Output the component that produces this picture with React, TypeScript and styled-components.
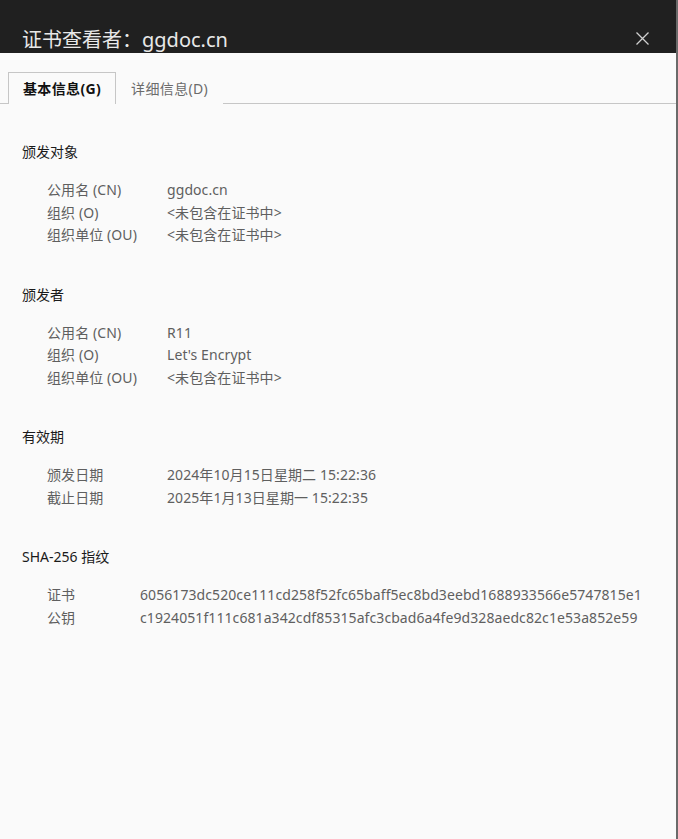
import React from "react";
import styled, { createGlobalStyle } from "styled-components";

const Global = createGlobalStyle`
  html, body { margin: 0; padding: 0; background: #fafafa; }
  body { font-family: "Noto Sans", "Noto Sans CJK SC", sans-serif; }
`;

const Window = styled.div`
  width: 678px;
  height: 839px;
  box-sizing: border-box;
  display: flex;
  flex-direction: column;
  background: #fafafa;
  border-right: 2px solid #6a6a6a;
  overflow: hidden;
`;

const TitleBar = styled.div`
  height: 53px;
  flex: none;
  background: #202020;
  display: flex;
  align-items: flex-end;
  justify-content: space-between;
  padding: 0 27px 0 22px;
  box-sizing: border-box;
`;

const Title = styled.div`
  color: #e8e8e8;
  font-size: 20px;
  line-height: 27px;
  font-family: "Segoe UI", "Noto Sans", "Noto Sans CJK SC", sans-serif;
`;

const CloseButton = styled.div`
  width: 14px;
  height: 14px;
  margin-bottom: 8px;
  display: flex;
  align-items: center;
  justify-content: center;
`;

const TabBar = styled.div`
  margin-top: 19px;
  display: flex;
  align-items: flex-end;
  padding-left: 8px;
  border-bottom: 1px solid #c6c6c6;
  height: 31px;
`;

const Tab = styled.div<{ $active?: boolean }>`
  box-sizing: border-box;
  padding: 0 14px 2px;
  display: flex;
  align-items: center;
  font-size: 14px;
  letter-spacing: 0.35px;
  font-weight: ${(p) => (p.$active ? 700 : 400)};
  color: ${(p) => (p.$active ? "#111" : "#6b6b6b")};
  border: 1px solid ${(p) => (p.$active ? "#c6c6c6" : "transparent")};
  border-bottom: none;
  background: #fafafa;
  margin-bottom: -1px;
  height: 32px;
`;

const Content = styled.div`
  padding: 38px 0 0 22px;
  display: flex;
  flex-direction: column;
  gap: 38px;
`;

const Section = styled.section`
  display: flex;
  flex-direction: column;
  gap: 17px;
`;

const SectionTitle = styled.div`
  font-size: 14px;
  line-height: 20px;
  color: #1a1a1a;
`;

const Rows = styled.div<{ $labelWidth: number }>`
  display: grid;
  grid-template-columns: ${(p) => p.$labelWidth}px auto;
  padding-left: 25px;
  grid-auto-rows: 22.5px;
  align-items: center;
`;

const Cell = styled.div`
  font-size: 14px;
  line-height: 22.5px;
  letter-spacing: 0.08px;
  color: #5f5f5f;
  white-space: nowrap;
`;

type Row = [string, string];

const sections: { title: string; labelWidth: number; rows: Row[] }[] = [
  {
    title: "颁发对象",
    labelWidth: 120,
    rows: [
      ["公用名 (CN)", "ggdoc.cn"],
      ["组织 (O)", "<未包含在证书中>"],
      ["组织单位 (OU)", "<未包含在证书中>"],
    ],
  },
  {
    title: "颁发者",
    labelWidth: 120,
    rows: [
      ["公用名 (CN)", "R11"],
      ["组织 (O)", "Let's Encrypt"],
      ["组织单位 (OU)", "<未包含在证书中>"],
    ],
  },
  {
    title: "有效期",
    labelWidth: 120,
    rows: [
      ["颁发日期", "2024年10月15日星期二 15:22:36"],
      ["截止日期", "2025年1月13日星期一 15:22:35"],
    ],
  },
  {
    title: "SHA-256 指纹",
    labelWidth: 93,
    rows: [
      ["证书", "6056173dc520ce111cd258f52fc65baff5ec8bd3eebd1688933566e5747815e1"],
      ["公钥", "c1924051f111c681a342cdf85315afc3cbad6a4fe9d328aedc82c1e53a852e59"],
    ],
  },
];

export default function App() {
  return (
    <>
      <Global />
      <Window>
        <TitleBar>
          <Title>证书查看者：ggdoc.cn</Title>
          <CloseButton>
            <svg width="13" height="13" viewBox="0 0 13 13">
              <path d="M0.5 0.5 L12.5 12.5 M12.5 0.5 L0.5 12.5" stroke="#d0d0d0" strokeWidth="1.3" />
            </svg>
          </CloseButton>
        </TitleBar>
        <TabBar>
          <Tab $active>基本信息(G)</Tab>
          <Tab>详细信息(D)</Tab>
        </TabBar>
        <Content>
          {sections.map((s) => (
            <Section key={s.title}>
              <SectionTitle>{s.title}</SectionTitle>
              <Rows $labelWidth={s.labelWidth}>
                {s.rows.map(([k, v]) => (
                  <React.Fragment key={k}>
                    <Cell>{k}</Cell>
                    <Cell>{v}</Cell>
                  </React.Fragment>
                ))}
              </Rows>
            </Section>
          ))}
        </Content>
      </Window>
    </>
  );
}
